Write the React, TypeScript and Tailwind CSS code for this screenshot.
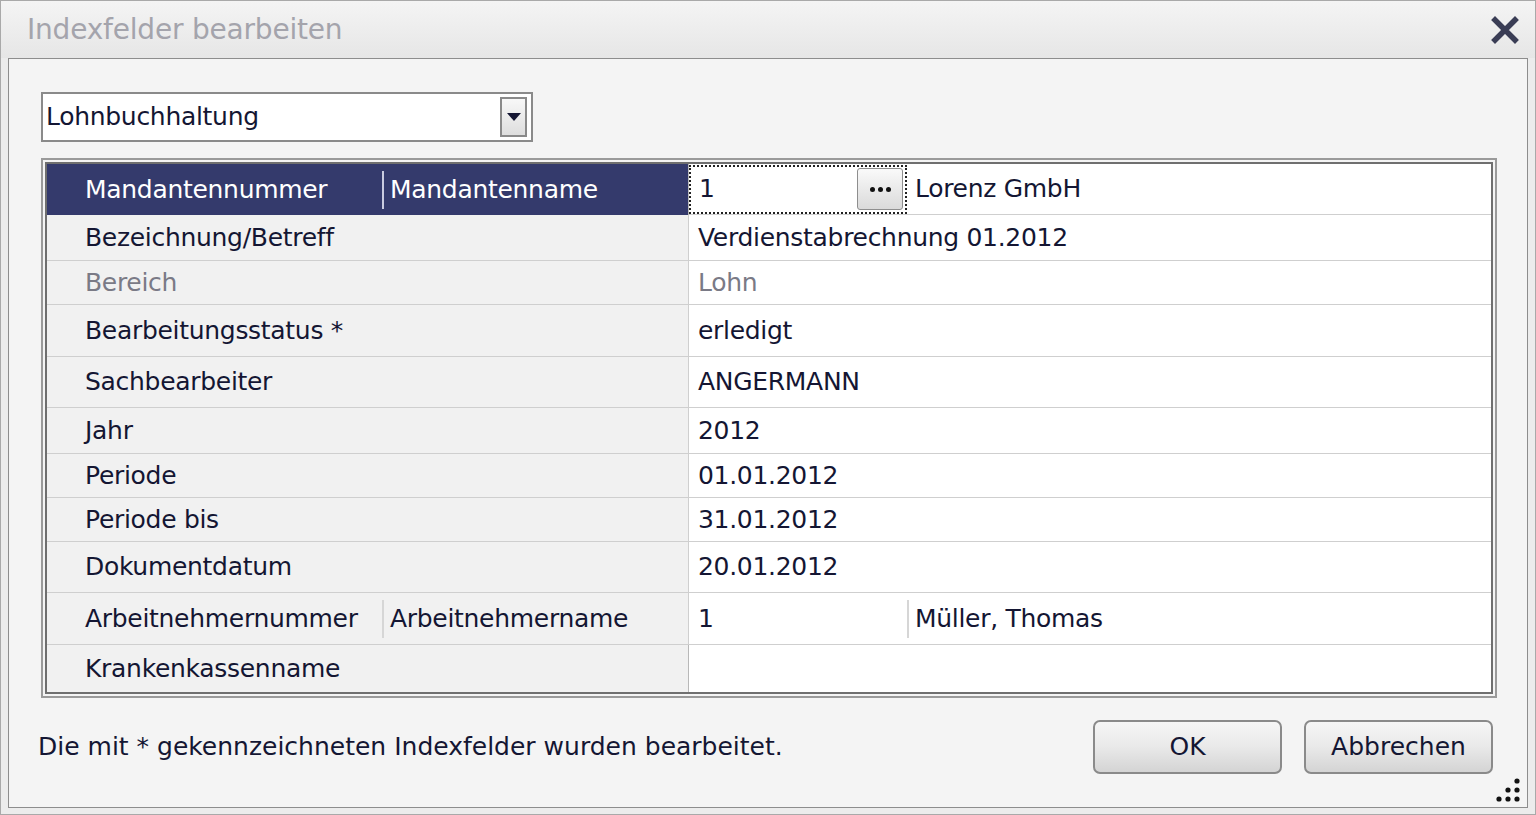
import React from 'react';

type Row = {
  h: string;
  left: string;
  leftB?: string;
  right: string;
  rightB?: string;
  muted?: boolean;
  selected?: boolean;
};

const rows: Row[] = [
  { h: 'h-[51px]', left: 'Mandantennummer', leftB: 'Mandantenname', right: '1', rightB: 'Lorenz GmbH', selected: true },
  { h: 'h-[46px]', left: 'Bezeichnung/Betreff', right: 'Verdienstabrechnung 01.2012' },
  { h: 'h-[44px]', left: 'Bereich', right: 'Lohn', muted: true },
  { h: 'h-[52px]', left: 'Bearbeitungsstatus *', right: 'erledigt' },
  { h: 'h-[51px]', left: 'Sachbearbeiter', right: 'ANGERMANN' },
  { h: 'h-[46px]', left: 'Jahr', right: '2012' },
  { h: 'h-[44px]', left: 'Periode', right: '01.01.2012' },
  { h: 'h-[44px]', left: 'Periode bis', right: '31.01.2012' },
  { h: 'h-[51px]', left: 'Dokumentdatum', right: '20.01.2012' },
  { h: 'h-[52px]', left: 'Arbeitnehmernummer', leftB: 'Arbeitnehmername', right: '1', rightB: 'Müller, Thomas' },
  { h: 'h-[47px]', left: 'Krankenkassenname', right: '' },
];

function GridRow({ row, last }: { row: Row; last: boolean }) {
  const border = last ? '' : 'border-b border-[#cfcfcf]';
  const textColor = row.muted ? 'text-[#7a7a86]' : 'text-[#141633]';

  return (
    <div className={`flex ${row.h}`}>
      <div
        className={`w-[642px] flex items-center shrink-0 border-r border-[#b8b8b8] ${
          row.selected ? 'bg-[#343a6c] text-white' : `bg-[#f1f1f1] ${textColor} ${border}`
        }`}
      >
        <div className="w-[335px] pl-[38px] shrink-0">{row.left}</div>
        {row.leftB && (
          <div className={`h-[38px] flex items-center pl-[6px] border-l-2 ${row.selected ? 'border-[#c9cbe0]' : 'border-[#d6d6d6]'}`}>
            {row.leftB}
          </div>
        )}
      </div>
      <div className={`flex-1 flex items-center bg-white ${textColor} ${border}`}>
        {row.selected ? (
          <>
            <div className="w-[218px] h-[49px] flex items-center justify-between pl-[8px] pr-[2px] border-2 border-dotted border-[#222]">
              <span>1</span>
              <div className="w-[46px] h-[42px] rounded-[3px] border border-[#8e8e8e] bg-gradient-to-b from-[#fafafa] to-[#dadada] flex items-center justify-center gap-[3px]">
                <span className="w-[5px] h-[5px] rounded-full bg-[#111]" />
                <span className="w-[5px] h-[5px] rounded-full bg-[#111]" />
                <span className="w-[5px] h-[5px] rounded-full bg-[#111]" />
              </div>
            </div>
            <div className="pl-[8px]">{row.rightB}</div>
          </>
        ) : row.rightB ? (
          <>
            <div className="w-[218px] pl-[9px] shrink-0">{row.right}</div>
            <div className="h-[38px] flex items-center pl-[6px] border-l-2 border-[#d6d6d6]">{row.rightB}</div>
          </>
        ) : (
          <div className="pl-[9px]">{row.right}</div>
        )}
      </div>
    </div>
  );
}

export default function App() {
  return (
    <div
      className="w-[1536px] h-[815px] bg-[#ececec] border border-[#a9a9a9] flex flex-col overflow-hidden"
      style={{ fontFamily: 'Tahoma, "DejaVu Sans", Verdana, sans-serif' }}
    >
      {/* title bar */}
      <div className="h-[57px] shrink-0 flex items-center justify-between pl-[26px] pr-[16px] bg-gradient-to-b from-[#f4f4f4] to-[#e6e6e6]">
        <span className="text-[28px] text-[#a4a4ac] tracking-[-0.2px]">Indexfelder bearbeiten</span>
        <svg width="28" height="28" viewBox="0 0 28 28">
          <path d="M4 4 L24 24 M24 4 L4 24" stroke="#3a3d55" strokeWidth="5.5" strokeLinecap="square" />
        </svg>
      </div>

      {/* content panel */}
      <div className="flex-1 ml-[7px] mr-[7px] mb-[6px] border border-[#8d8d8d] bg-[#f4f4f4] flex flex-col text-[25px] text-[#141633] relative">
        {/* dropdown */}
        <div className="mt-[33px] ml-[32px] w-[492px] h-[50px] border-2 border-[#8a8a8a] bg-white flex items-center justify-between pl-[3px] pr-[4px] tracking-[-0.3px]">
          <span>Lohnbuchhaltung</span>
          <div className="w-[27px] h-[40px] border-2 border-[#8a8a8a] bg-gradient-to-b from-[#f8f8f8] to-[#dedede] flex items-center justify-center">
            <svg width="14" height="8" viewBox="0 0 14 8">
              <path d="M0 0 L14 0 L7 8 Z" fill="#141633" />
            </svg>
          </div>
        </div>

        {/* grid */}
        <div className="mt-[16px] ml-[32px] w-[1456px] border-2 border-[#9a9a9a] p-[2px] tracking-[-0.3px]">
          <div className="border-2 border-[#6f6f6f] flex flex-col">
            {rows.map((r, i) => (
              <GridRow key={r.left} row={r} last={i === rows.length - 1} />
            ))}
          </div>
        </div>

        {/* footer */}
        <div className="flex items-center justify-between mt-[22px] pl-[29px] pr-[34px]">
          <span>Die mit * gekennzeichneten Indexfelder wurden bearbeitet.</span>
          <div className="flex gap-[22px]">
            <button className="w-[189px] h-[54px] rounded-[7px] border-2 border-[#8a8a8a] bg-gradient-to-b from-[#f6f6f6] via-[#e9e9e9] to-[#d4d4d4] text-[#141633]">
              OK
            </button>
            <button className="w-[189px] h-[54px] rounded-[7px] border-2 border-[#8a8a8a] bg-gradient-to-b from-[#f6f6f6] via-[#e9e9e9] to-[#d4d4d4] text-[#141633]">
              Abbrechen
            </button>
          </div>
        </div>

        {/* resize grip */}
        <svg className="absolute right-[6px] bottom-[4px]" width="26" height="26" viewBox="0 0 26 26">
          <circle cx="22" cy="4" r="2.6" fill="#111" />
          <circle cx="22" cy="13" r="2.6" fill="#111" />
          <circle cx="13" cy="13" r="2.6" fill="#111" />
          <circle cx="22" cy="22" r="2.6" fill="#111" />
          <circle cx="13" cy="22" r="2.6" fill="#111" />
          <circle cx="4" cy="22" r="2.6" fill="#111" />
        </svg>
      </div>
    </div>
  );
}
